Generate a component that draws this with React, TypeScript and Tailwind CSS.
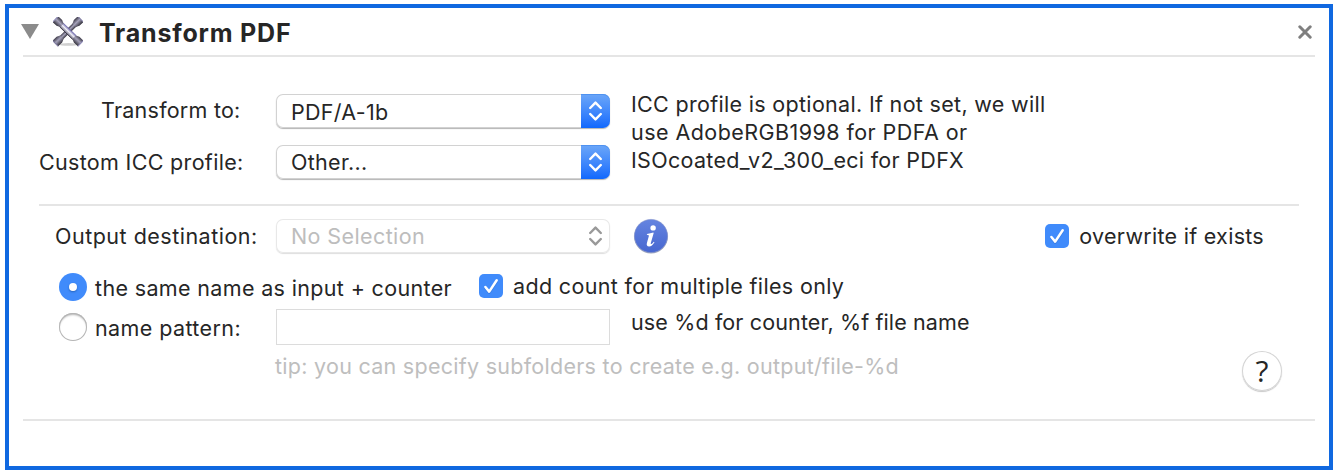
import type { ReactNode } from "react";

function Chevrons({ className }: { className: string }) {
  return (
    <svg width="14" height="20" viewBox="0 0 14 20" fill="none" strokeWidth="2.4" strokeLinecap="round" strokeLinejoin="round" className={className}>
      <path d="M1.2 7 6.5 1.6 11.8 7M1.2 13 6.5 18.4 11.8 13" />
    </svg>
  );
}

function Popup({ children, disabled = false }: { children: ReactNode; disabled?: boolean }) {
  return (
    <button
      disabled={disabled}
      className={
        disabled
          ? "flex h-[34px] w-[334px] shrink-0 items-stretch rounded-[7px] bg-white text-left text-[#bdbdbd] shadow-[inset_0_0_0_1px_#e8e8e8,0_1px_1px_#dedede]"
          : "flex h-[34px] w-[334px] shrink-0 items-stretch rounded-[7px] bg-white text-left shadow-[inset_0_0_0_1px_#d2d2d2,0_1px_1px_#b4b4b4]"
      }
    >
      <span className="flex flex-1 items-center pl-[15px]">{children}</span>
      <span
        className={
          disabled
            ? "flex w-[29px] items-center justify-center"
            : "flex w-[29px] items-center justify-center rounded-r-[7px] bg-linear-to-b from-[#6ba6f8] to-[#0f68fd] shadow-[inset_0_1px_0_#4f92f0]"
        }
      >
        <Chevrons className={disabled ? "stroke-[#999999]" : "stroke-white"} />
      </span>
    </button>
  );
}

function Checkbox() {
  return (
    <span className="flex size-6 shrink-0 items-center justify-center rounded-[5px] bg-[#408bfb]">
      <svg width="24" height="24" viewBox="0 0 24 24" fill="none" strokeLinecap="round" strokeLinejoin="round">
        <path d="M6.4 14.2 10.2 18.8 17.7 7.5" stroke="#2f6fd0" strokeWidth="2.4" opacity=".5" />
        <path d="M6.4 13 10.2 17.6 17.7 6.3" stroke="#fff" strokeWidth="2.5" />
      </svg>
    </span>
  );
}

function WrenchIcon() {
  return (
    <svg width="30" height="30" viewBox="0 0 30 30">
      <defs>
        <linearGradient id="metalA" x1="0" y1="0" x2="0" y2="1">
          <stop offset="0" stopColor="#3e3b49" />
          <stop offset=".45" stopColor="#a5a2ba" />
          <stop offset="1" stopColor="#33313b" />
        </linearGradient>
        <linearGradient id="metalB" x1="0" y1="0" x2="0" y2="1">
          <stop offset="0" stopColor="#7a75ad" />
          <stop offset=".45" stopColor="#f0eff8" />
          <stop offset="1" stopColor="#6b687d" />
        </linearGradient>
      </defs>
      <ellipse cx="15.5" cy="27.4" rx="9.5" ry="1.4" fill="#d0d0d0" />
      <g transform="translate(15 14.3) rotate(-44)">
        <rect x="-12" y="-2.4" width="24" height="4.8" fill="url(#metalA)" />
        <path d="M-17.5-4h5.5l3.5 1.6v4.8l-3.5 1.6h-5.5zM17.5-4h-5.5l-3.5 1.6v4.8l3.5 1.6h5.5z" fill="url(#metalA)" />
        <path d="M-17.5-4v8M17.5-4v8" stroke="#7c789f" strokeWidth="1" />
      </g>
      <g transform="translate(15 14.3) rotate(44)">
        <rect x="-12" y="-2.6" width="24" height="5.2" fill="url(#metalB)" />
        <path d="M-9-2.6H9" stroke="#6c66ae" strokeWidth=".7" />
        <path d="M-9 2.6H9" stroke="#393643" strokeWidth=".9" />
        <path d="M-17.5-4h5.5l3.5 1.6v4.8l-3.5 1.6h-5.5zM17.5-4h-5.5l-3.5 1.6v4.8l3.5 1.6h5.5z" fill="url(#metalA)" />
        <path d="M-17.5-4v8M17.5-4v8" stroke="#8d89b6" strokeWidth="1" />
      </g>
    </svg>
  );
}

function InfoIcon() {
  return (
    <svg width="36" height="36" viewBox="0 0 36 36">
      <defs>
        <linearGradient id="infoFill" x1="0" y1="0" x2="0" y2="1">
          <stop offset="0" stopColor="#6584e0" />
          <stop offset="1" stopColor="#4767d0" />
        </linearGradient>
      </defs>
      <circle cx="18" cy="18.6" r="16.9" fill="#a3a9b8" />
      <circle cx="18" cy="18" r="16.6" fill="url(#infoFill)" stroke="#8796cf" strokeWidth=".6" />
      <circle cx="20.1" cy="9.9" r="2.7" fill="#fff" />
      <path d="M14 15.9c2.3-.2 4.4-.7 6.3-1.3l.4.3-2.8 9.9c-.3 1.1 0 1.4.4 1.3.8-.2 1.7-1.3 2.5-2.3l.7.5c-1.7 2.8-3.4 4.2-5.4 4.2-2 0-2.8-1.3-2.2-3.4l1.9-6.8c.3-1.1 0-1.5-2-1.6z" fill="#fff" />
    </svg>
  );
}

export default function App() {
  return (
    <div className="h-[474px] w-[1339px] overflow-hidden bg-white pt-1 pl-[5px] font-['Inter','Liberation_Sans',sans-serif] text-[21.5px] leading-7 whitespace-nowrap text-[#262626]">
      <section className="h-[466px] w-[1328px] border-4 border-[#1068e0] px-[14px]">
        <header className="flex h-[49px] items-center border-b-2 border-[#e5e5e5]">
          <svg width="18" height="15" viewBox="0 0 18 15" className="-ml-[2px] shrink-0">
            <path d="M0 0H18L9 15Z" fill="#8b8b8b" />
          </svg>
          <div className="ml-[14px] flex">
            <WrenchIcon />
          </div>
          <h1 className="mt-[2px] ml-4 text-[25px] font-bold tracking-[0.8px]">Transform PDF</h1>
          <button aria-label="Close" className="mr-[3px] ml-auto">
            <svg width="14" height="14" viewBox="0 0 14 14" stroke="#7f7f7f" strokeWidth="3" strokeLinecap="round">
              <path d="M1.8 1.8 12.2 12.2M12.2 1.8 1.8 12.2" />
            </svg>
          </button>
        </header>

        <div className="mx-4 flex h-[149px] border-b-2 border-[#e5e5e5] pt-[37px]">
          <div className="flex w-[237px] flex-col gap-[17px]">
            <label className="-mt-px flex h-[35px] items-center pb-px pl-[62px] tracking-[0.25px]">Transform to:</label>
            <label className="flex h-[34px] items-center tracking-[0.32px]">Custom ICC profile:</label>
          </div>
          <div className="flex flex-col gap-[17px]">
            <Popup><span className="mt-[2px] tracking-[0.299px]">PDF/A-1b</span></Popup>
            <Popup><span className="tracking-[0.306px]">Other...</span></Popup>
          </div>
          <p className="-mt-1 ml-[21px]">
            <span className="block tracking-[0.316px]">ICC profile is optional. If not set, we will</span>
            <span className="block tracking-[0.442px]">use AdobeRGB1998 for PDFA or</span>
            <span className="block tracking-[0.3px]">ISOcoated_v2_300_eci for PDFX</span>
          </p>
        </div>

        <div className="mx-4 h-[213px] pt-[13px]">
          <div className="flex h-[34px] items-center">
            <label className="w-[237px] pl-4 tracking-[0.498px]">Output destination:</label>
            <Popup disabled><span className="tracking-[0.398px]">No Selection</span></Popup>
            <span className="ml-[23px]"><InfoIcon /></span>
            <label className="mr-[35px] ml-auto flex items-center">
              <Checkbox />
              <span className="ml-[10px] tracking-[0.28px]">overwrite if exists</span>
            </label>
          </div>

          <div className="mt-5 flex h-7 items-center pl-5">
            <span className="flex size-7 shrink-0 items-center justify-center rounded-full bg-[#408bfb]">
              <span className="size-2 rounded-full bg-white shadow-[0_1px_2px_#2463bd]" />
            </span>
            <span className="mt-[2px] ml-2 w-[384px] tracking-[0.345px]">the same name as input + counter</span>
            <div className="-mt-[2px] flex items-center">
              <Checkbox />
              <span className="ml-[10px] tracking-[0.34px]">add count for multiple files only</span>
            </div>
          </div>

          <div className="mt-2 flex h-9 items-center">
            <div className="flex w-[237px] items-center pl-5">
              <span className="size-7 shrink-0 rounded-full bg-white shadow-[inset_0_0_0_1px_#b5b5b5,inset_0_2px_2px_#b9b9b9]" />
              <span className="mt-[2px] ml-2 tracking-[0.4px]">name pattern:</span>
            </div>
            <input aria-label="name pattern" className="h-9 w-[334px] shrink-0 border border-[#dcdcdc] px-3 outline-none" />
            <span className="-mt-[10px] ml-[21px] tracking-[0.131px]">use %d for counter, %f file name</span>
          </div>

          <div className="flex items-start justify-between pr-[17px] pl-[236px]">
            <p className="mt-[7px] tracking-[0.275px] text-[#bebebe]">tip: you can specify subfolders to create e.g. output/file-%d</p>
            <button className="mt-[6px] flex size-10 items-center justify-center rounded-full bg-white font-['Open_Sans','Inter',sans-serif] text-[30px] font-medium shadow-[inset_0_0_0_1px_#d4d4d4,0_1px_1px_#c8c8c8]">?</button>
          </div>
        </div>
        <hr className="border-t-2 border-[#e5e5e5]" />
      </section>
    </div>
  );
}
